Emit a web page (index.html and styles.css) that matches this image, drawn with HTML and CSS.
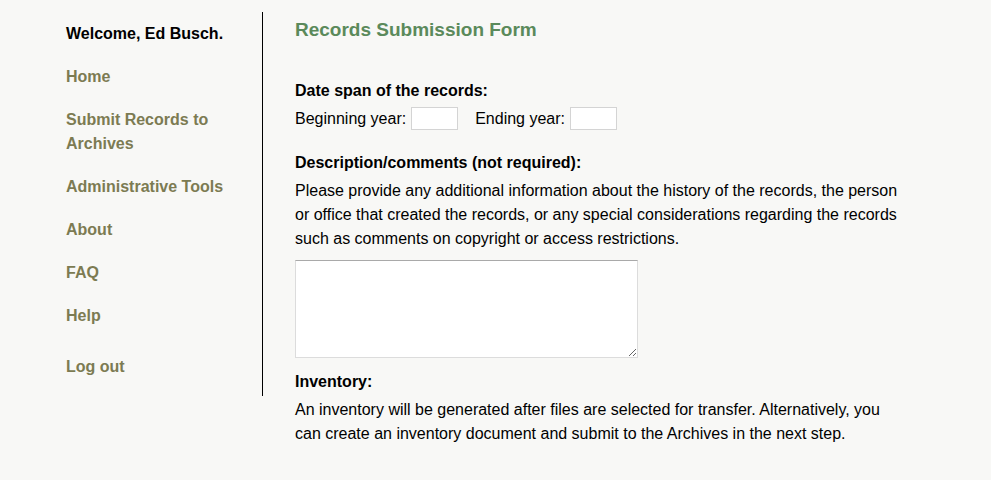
FILE: index.html
```html
<!DOCTYPE html>
<html>
<head>
<meta charset="utf-8">
<link rel="stylesheet" href="styles.css">
</head>
<body>
<div class="page">
  <nav class="sidebar">
    <div class="welcome">Welcome, Ed Busch.</div>
    <a class="nav-link" href="#">Home</a>
    <a class="nav-link" href="#">Submit Records to Archives</a>
    <a class="nav-link" href="#">Administrative Tools</a>
    <a class="nav-link" href="#">About</a>
    <a class="nav-link" href="#">FAQ</a>
    <a class="nav-link" href="#">Help</a>
    <a class="nav-link logout" href="#">Log out</a>
  </nav>
  <main class="main">
    <h1 class="title">Records Submission Form</h1>
    <div class="label first">Date span of the records:</div>
    <div class="year-row">
      <span>Beginning year:</span><input class="year" type="text">
      <span class="ending">Ending year:</span><input class="year" type="text">
    </div>
    <div class="label section">Description/comments (not required):</div>
    <p class="text">Please provide any additional information about the history of the records, the person or office that created the records, or any special considerations regarding the records such as comments on copyright or access restrictions.</p>
    <textarea class="comments"></textarea>
    <div class="label inv">Inventory:</div>
    <p class="text">An inventory will be generated after files are selected for transfer. Alternatively, you can create an inventory document and submit to the Archives in the next step.</p>
  </main>
</div>
</body>
</html>
```
FILE: styles.css
```css
html, body {
  margin: 0;
  padding: 0;
  background: #f8f8f6;
  font-family: "Liberation Sans", Arial, sans-serif;
  font-size: 16px;
  line-height: 24px;
  color: #000;
}
.page {
  display: flex;
  align-items: flex-start;
  padding: 12px 0 0 66px;
}
.sidebar {
  width: 196px;
  border-right: 1px solid #000;
  padding: 10px 0 17px 0;
  display: flex;
  flex-direction: column;
  box-sizing: content-box;
}
.welcome {
  font-weight: bold;
  color: #000;
}
.nav-link {
  display: block;
  margin-top: 19px;
  font-weight: bold;
  color: #7c7b52;
  text-decoration: none;
  width: 160px;
}
.nav-link.logout {
  margin-top: 27px;
}
.main {
  padding-left: 32px;
  width: 612px;
}
.title {
  margin: 6px 0 0 0;
  font-size: 19px;
  line-height: 24px;
  font-weight: bold;
  color: #5b8a5b;
}
.label {
  font-weight: bold;
  margin-bottom: 4px;
}
.label.first { margin-top: 37px; }
.label.section { margin-top: 20px; }
.label.inv { margin-top: 12px; }
.year-row {
  display: flex;
  align-items: center;
  height: 24px;
}
.year {
  width: 47px;
  height: 23px;
  box-sizing: border-box;
  border: 1px solid #d4d4d4;
  background: #fff;
  margin: -2px 0 0 5px;
  padding: 0;
}
.ending {
  margin-left: 17px;
}
.text {
  margin: 0;
}
.comments {
  display: block;
  margin-top: 9px;
  width: 343px;
  height: 98px;
  box-sizing: border-box;
  border: 1px solid #dcdcdc;
  border-top-color: #a9a9a9;
  background: #fff;
  resize: both;
}
```
